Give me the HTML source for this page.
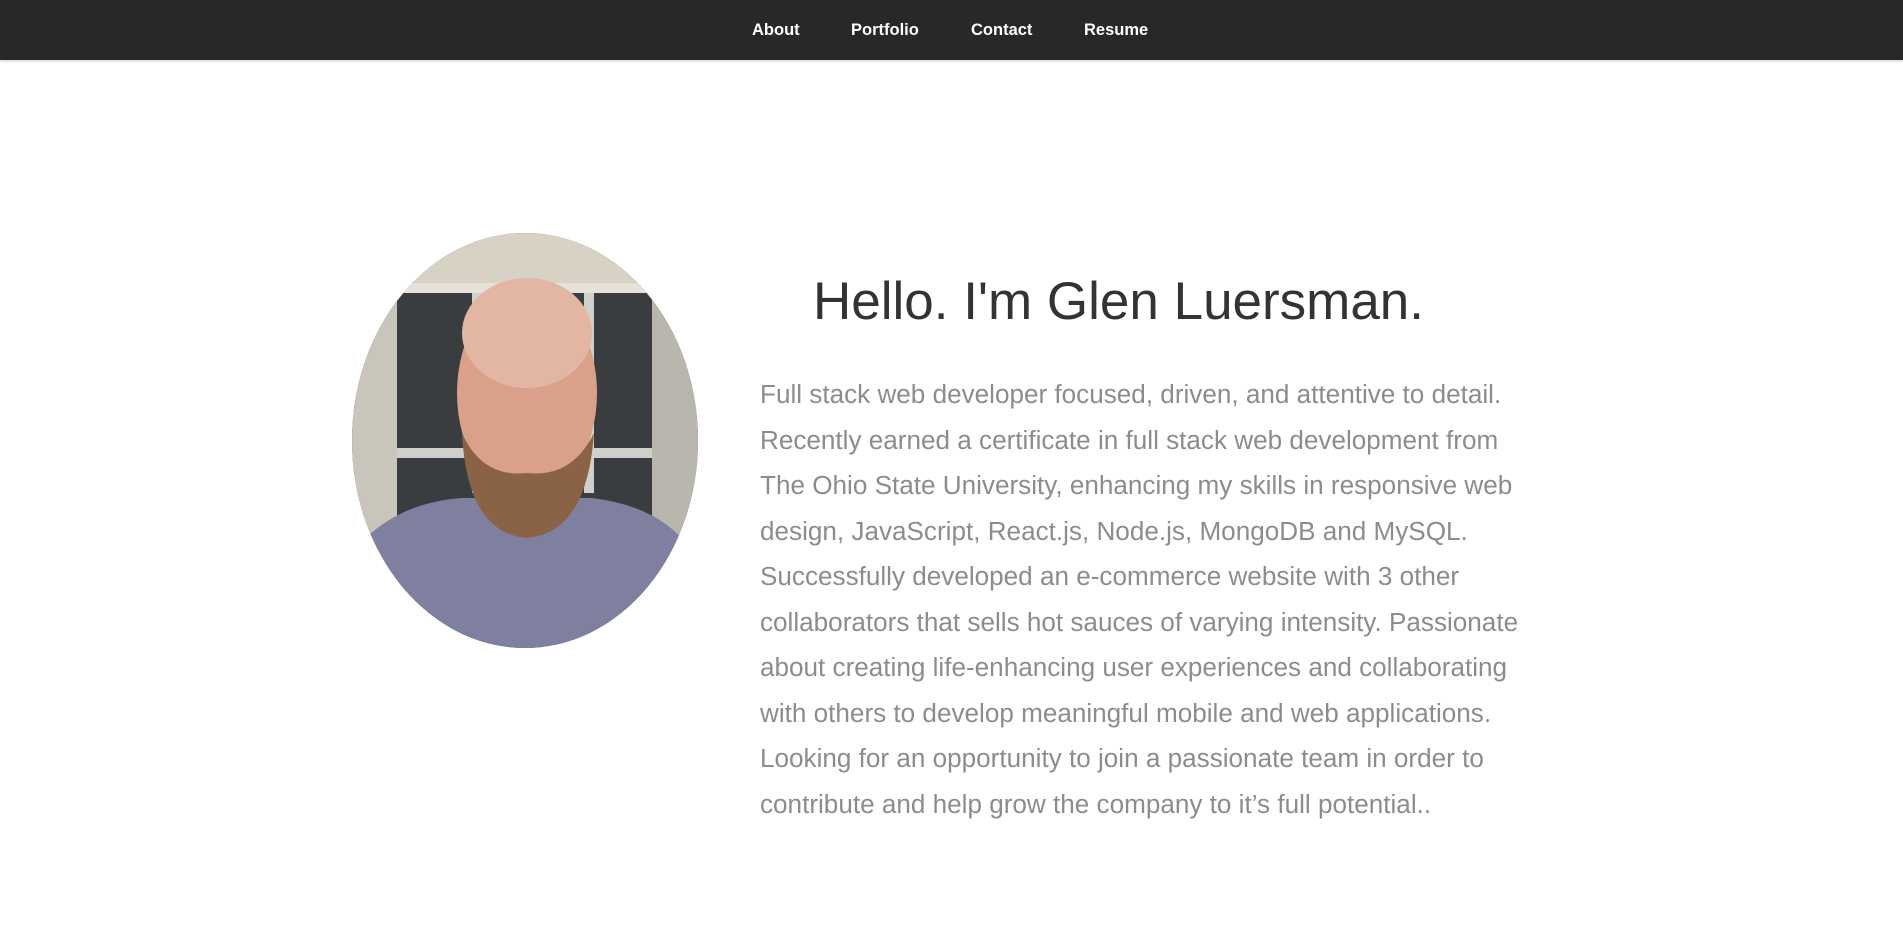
<!DOCTYPE html>
<html><head><meta charset="utf-8"><style>
html,body{margin:0;padding:0;background:#fff;width:1903px;height:935px;overflow:hidden;font-family:"Liberation Sans",sans-serif}
nav{position:absolute;left:0;top:0;width:1903px;height:60px;background:#282828;box-shadow:0 1px 3px rgba(0,0,0,.2)}
nav a{position:absolute;top:21px;color:#fff;font-weight:bold;font-size:16.5px;text-decoration:none}
h1{position:absolute;left:760px;width:717px;text-align:center;top:275px;margin:0;font-weight:normal;font-size:53px;color:#333;line-height:1;letter-spacing:0}
p{position:absolute;left:760px;top:372px;margin:0;font-size:26.1px;line-height:45.5px;color:#8c8c8c;white-space:nowrap}
svg{position:absolute;left:352px;top:233px}
</style></head><body>
<nav><a style="left:752px">About</a><a style="left:851px">Portfolio</a><a style="left:971px">Contact</a><a style="left:1084px">Resume</a></nav>
<svg width="346" height="415" viewBox="0 0 346 415">
<defs><clipPath id="c"><ellipse cx="173" cy="207.5" rx="173" ry="207.5"/></clipPath></defs>
<g clip-path="url(#c)">
<rect width="346" height="415" fill="#3a3d40"/>
<rect width="346" height="50" fill="#d8d2c4"/>
<rect x="0" y="50" width="346" height="10" fill="#e6e2da"/>
<rect x="0" y="60" width="45" height="355" fill="#c9c5bb"/>
<rect x="300" y="60" width="46" height="355" fill="#b9b6ae"/>
<rect x="45" y="215" width="255" height="10" fill="#cfd0cc"/>
<rect x="120" y="60" width="10" height="200" fill="#d0d0cc"/>
<rect x="232" y="60" width="10" height="200" fill="#d0d0cc"/>
<path d="M0 320 Q40 270 110 265 L240 265 Q320 275 346 330 L346 415 L0 415Z" fill="#7f80a0"/>
<ellipse cx="175" cy="160" rx="70" ry="105" fill="#d9a08a"/>
<ellipse cx="175" cy="100" rx="65" ry="55" fill="#e2b6a3"/>
<path d="M110 200 Q115 300 175 305 Q235 300 242 200 Q220 245 175 240 Q130 245 110 200Z" fill="#8a6246"/>
</g></svg>
<h1>Hello. I'm Glen Luersman.</h1>
<p>Full stack web developer focused, driven, and attentive to detail.<br>Recently earned a certificate in full stack web development from<br>The Ohio State University, enhancing my skills in responsive web<br>design, JavaScript, React.js, Node.js, MongoDB and MySQL.<br>Successfully developed an e-commerce website with 3 other<br>collaborators that sells hot sauces of varying intensity. Passionate<br>about creating life-enhancing user experiences and collaborating<br>with others to develop meaningful mobile and web applications.<br>Looking for an opportunity to join a passionate team in order to<br>contribute and help grow the company to it’s full potential..</p>
</body></html>
